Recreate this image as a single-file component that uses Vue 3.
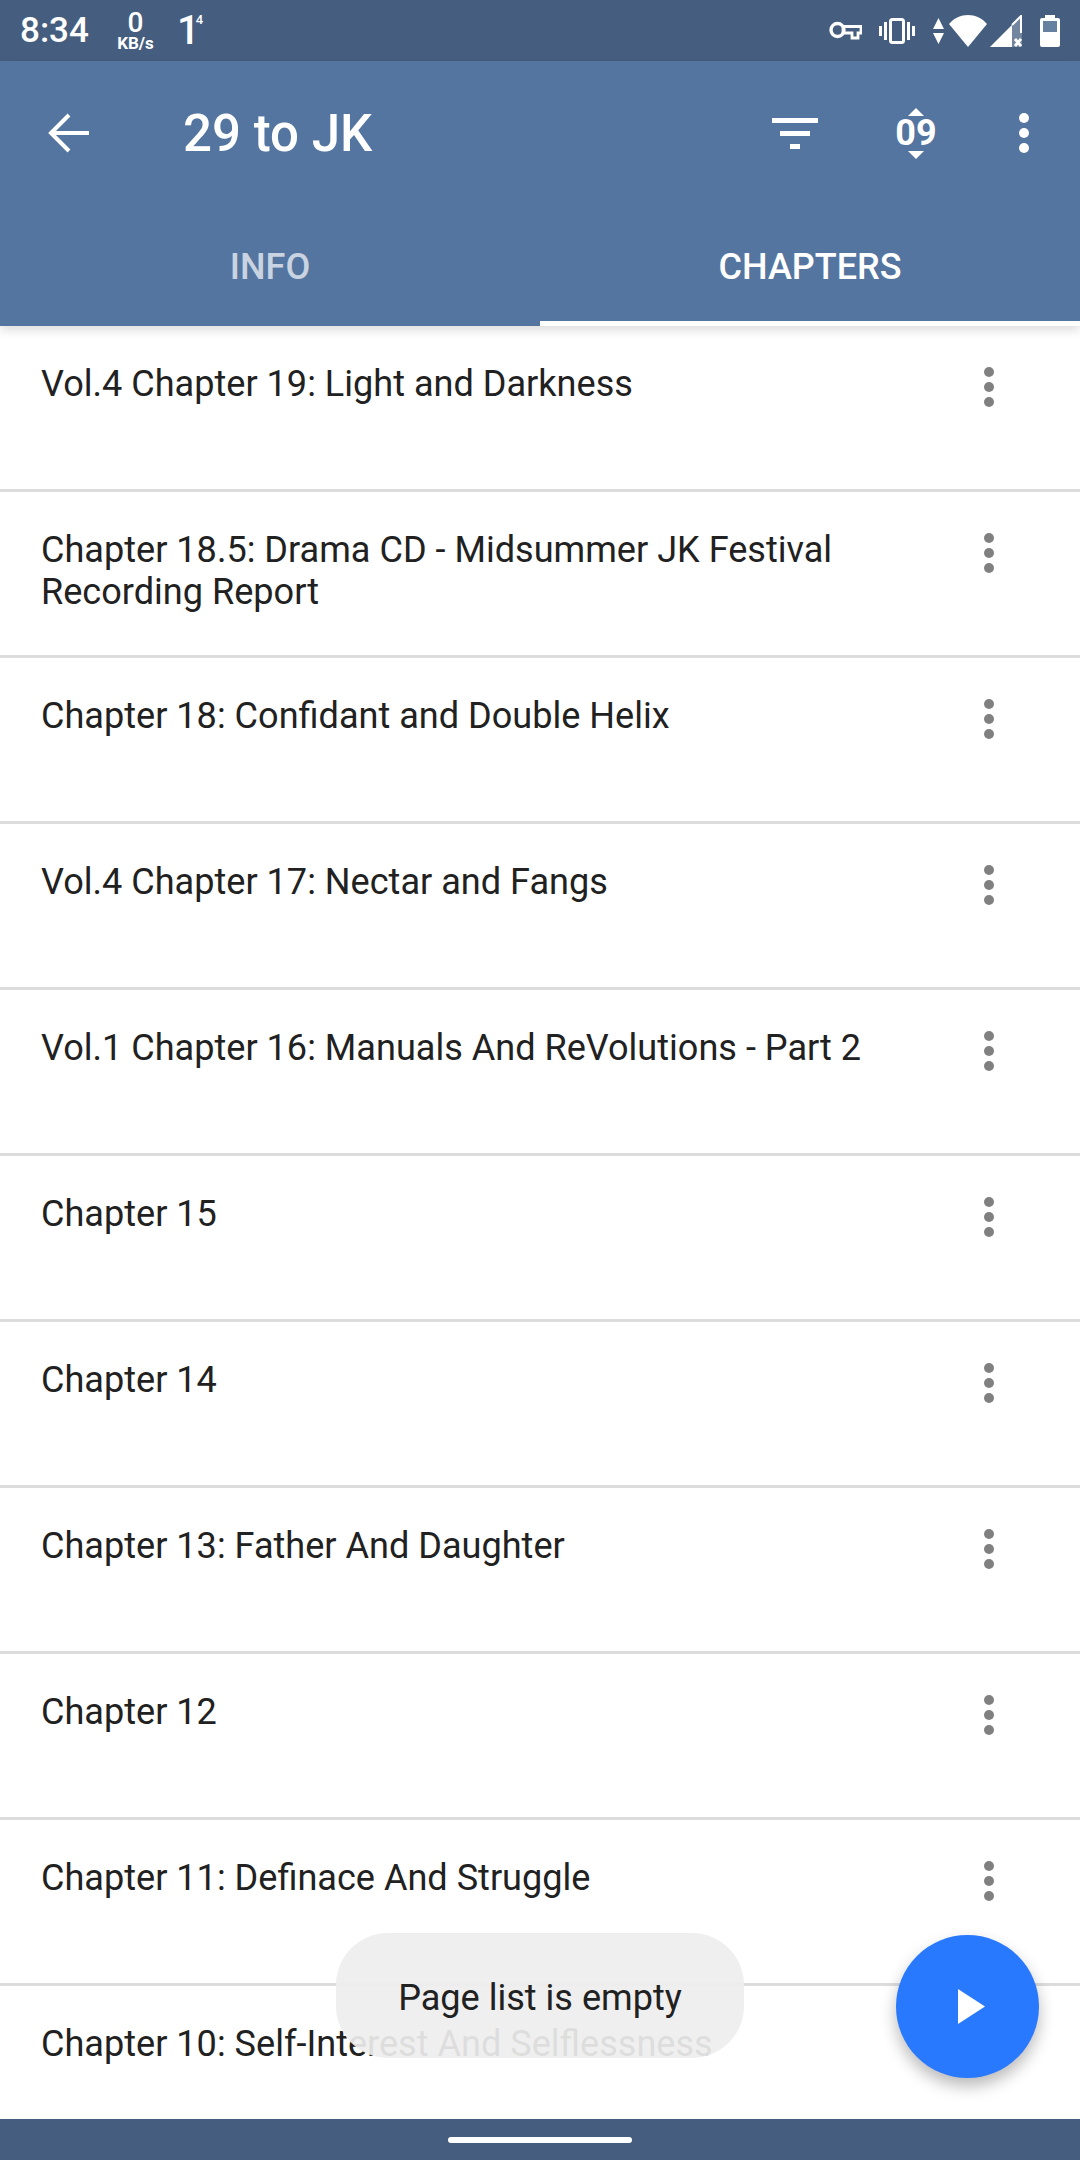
<template>
  <div class="screen">
    <div class="status">
      <span class="clock">8:34</span>
      <div class="speed"><span class="speed-num">0</span><span class="speed-unit">KB/s</span></div>
      <span class="one">1<sup>4</sup></span>
      <div class="spacer"></div>
      <svg class="st-key" width="33" height="19" viewBox="0 0 33 19">
        <circle cx="8.500" cy="9" r="6.500" fill="none" stroke="#fff" stroke-width="3.400" />
        <path d="M14 5.500H32V12H29V17H23V12H14Z" fill="none" stroke="#fff" stroke-width="2.800" />
      </svg>
      <svg class="st-vib" width="36" height="26" viewBox="0 0 36 26">
        <rect x="0" y="8" width="3" height="10" fill="#fff" />
        <rect x="5" y="4" width="3" height="18" fill="#fff" />
        <rect x="11.500" y="1.500" width="13" height="23" rx="2" fill="none" stroke="#fff" stroke-width="3" />
        <rect x="28" y="4" width="3" height="18" fill="#fff" />
        <rect x="33" y="8" width="3" height="10" fill="#fff" />
      </svg>
      <svg class="st-arrows" width="11" height="26" viewBox="0 0 11 26">
        <path d="M5.500 0L11 11H0Z M0 15H11L5.500 26Z" fill="#fff" />
      </svg>
      <svg class="st-wifi" width="38" height="32" viewBox="0 0 38 32">
        <path d="M0 9C10 -3 28 -3 38 9L19 32Z" fill="#fff" />
      </svg>
      <svg class="st-signal" width="32" height="32" viewBox="0 0 32 32">
        <path d="M32 0V32H0Z" fill="#fff" fill-opacity="0.25" />
        <path d="M0 32L22 10V32Z" fill="#fff" />
        <path d="M22 10L31 1V18" fill="none" stroke="#fff" stroke-width="2" />
        <path d="M25 24L31 31M31 24L25 31" stroke="#fff" stroke-width="2.800" />
      </svg>
      <svg class="st-batt" width="20" height="32" viewBox="0 0 20 32">
        <path d="M5 0H15V3H18A2 2 0 0 1 20 5V30A2 2 0 0 1 18 32H2A2 2 0 0 1 0 30V5A2 2 0 0 1 2 3H5Z" fill="#fff" />
        <rect x="3" y="6" width="14" height="11" fill="#66809f" />
      </svg>
    </div>

    <header class="appbar">
      <div class="toolbar">
        <svg class="back" width="42" height="40" viewBox="0 0 42 40">
          <path d="M41 20H3M21 2L3 20L21 38" fill="none" stroke="#fff" stroke-width="4" />
        </svg>
        <span class="title">29 to JK</span>
        <div class="spacer"></div>
        <div class="filter"><i class="l1"></i><i class="l2"></i><i class="l3"></i></div>
        <div class="sort">
          <svg width="16" height="8" viewBox="0 0 16 8"><path d="M8 0L16 8H0Z" fill="#fff" /></svg>
          <span class="sort-num">09</span>
          <svg width="16" height="8" viewBox="0 0 16 8"><path d="M0 0H16L8 8Z" fill="#fff" /></svg>
        </div>
        <div class="more"><i></i><i></i><i></i></div>
      </div>
      <div class="tabs">
        <div class="tab">INFO</div>
        <div class="tab active">CHAPTERS</div>
      </div>
    </header>

    <main class="list">
      <div v-for="c in chapters" :key="c" class="row">
        <div class="name">{{ c }}</div>
        <div class="dots"><i></i><i></i><i></i></div>
      </div>
    </main>

    <div class="navbar"><div class="pill"></div></div>

    <div class="toast">Page list is empty</div>
    <div class="fab">
      <svg width="27" height="35" viewBox="0 0 27 35"><path d="M0 0L27 17.500L0 35Z" fill="#fff" /></svg>
    </div>
  </div>
</template>

<script setup>
const chapters = [
  'Vol.4 Chapter 19: Light and Darkness',
  'Chapter 18.5: Drama CD - Midsummer JK Festival Recording Report',
  'Chapter 18: Confidant and Double Helix',
  'Vol.4 Chapter 17: Nectar and Fangs',
  'Vol.1 Chapter 16: Manuals And ReVolutions - Part 2',
  'Chapter 15',
  'Chapter 14',
  'Chapter 13: Father And Daughter',
  'Chapter 12',
  'Chapter 11: Definace And Struggle',
  'Chapter 10: Self-Interest And Selflessness'
];
</script>

<style scoped>
.screen {
  position: relative;
  width: 1080px;
  height: 2160px;
  display: flex;
  flex-direction: column;
  overflow: hidden;
  background: #fff;
  font-family: Roboto, sans-serif;
}
.spacer {
  flex: 1;
}
.status {
  height: 61px;
  background: #455e7f;
  display: flex;
  align-items: center;
  padding-left: 20px;
  color: #fff;
  flex-shrink: 0;
}
.clock {
  font-size: 35px;
  font-weight: 500;
  width: 97px;
}
.speed {
  display: flex;
  flex-direction: column;
  align-items: center;
  width: 37px;
}
.speed-num {
  font-size: 28px;
  font-weight: 500;
  line-height: 24px;
}
.speed-unit {
  font-size: 17px;
  font-weight: 700;
  line-height: 16px;
}
.one {
  font-size: 40px;
  font-weight: 500;
  margin-left: 23px;
  line-height: 44px;
}
.one sup {
  font-size: 13px;
  vertical-align: 20px;
  line-height: 0;
  margin-left: -4px;
}
.st-key {
  margin-right: 17px;
}
.st-vib {
  margin-right: 18px;
}
.st-arrows {
  margin-right: 5px;
}
.st-wifi {
  margin-right: 3px;
}
.st-signal {
  margin-right: 18px;
}
.st-batt {
  margin-right: 20px;
}
.appbar {
  background: #54759f;
  flex-shrink: 0;
  height: 265px;
  box-shadow: 0 4px 10px rgba(0, 0, 0, 0.14);
  position: relative;
  z-index: 1;
}
.toolbar {
  height: 144px;
  display: flex;
  align-items: center;
  padding-left: 48px;
  color: #fff;
}
.title {
  font-size: 51px;
  font-weight: 500;
  margin-left: 93px;
}
.filter {
  display: flex;
  flex-direction: column;
  align-items: center;
  gap: 8px;
  width: 46px;
}
.filter i {
  display: block;
  height: 5px;
  background: #fff;
}
.l1 { width: 46px; }
.l2 { width: 30px; }
.l3 { width: 10px; }
.sort {
  width: 60px;
  margin-left: 68px;
  display: flex;
  flex-direction: column;
  align-items: center;
}
.sort svg {
  display: block;
}
.sort-num {
  font-size: 36px;
  font-weight: 700;
  line-height: 35px;
}
.more {
  display: flex;
  flex-direction: column;
  gap: 5px;
  margin-left: 73px;
  margin-right: 51px;
}
.more i,
.dots i {
  display: block;
  width: 10px;
  height: 10px;
  border-radius: 50%;
  background: #fff;
}
.tabs {
  display: flex;
  height: 121px;
}
.tab {
  flex: 1;
  display: flex;
  align-items: center;
  justify-content: center;
  padding-top: 2px;
  font-size: 36px;
  font-weight: 500;
  color: rgba(255, 255, 255, 0.7);
  box-sizing: border-box;
}
.tab.active {
  color: #fff;
  border-bottom: 5px solid #fff;
  padding-top: 7px;
}
.list {
  flex: 1;
  overflow: hidden;
  min-height: 0;
}
.row {
  height: 166px;
  box-sizing: border-box;
  border-bottom: 3px solid #dcdcdc;
  display: flex;
  padding: 37px 0 0 41px;
}
.name {
  width: 910px;
  font-size: 36.1px;
  line-height: 42px;
  color: #212121;
}
.dots {
  display: flex;
  flex-direction: column;
  gap: 5px;
  margin-left: 33px;
  padding-top: 4px;
}
.dots i {
  background: #808080;
}
.navbar {
  height: 41px;
  background: #455e7f;
  flex-shrink: 0;
  display: flex;
  justify-content: center;
  align-items: center;
}
.pill {
  width: 184px;
  height: 6px;
  border-radius: 3px;
  background: #fff;
}
.toast {
  position: absolute;
  left: 336px;
  top: 1933px;
  width: 408px;
  height: 125px;
  padding-top: 4px;
  box-sizing: border-box;
  border-radius: 52px;
  background: rgba(238, 238, 238, 0.92);
  color: #212121;
  font-size: 36.1px;
  display: flex;
  align-items: center;
  justify-content: center;
}
.fab {
  position: absolute;
  left: 896px;
  top: 1935px;
  width: 143px;
  height: 143px;
  border-radius: 50%;
  background: #2979ff;
  display: flex;
  align-items: center;
  justify-content: center;
  box-shadow: 0 8px 16px rgba(0, 0, 0, 0.28);
}
.fab svg {
  margin-left: 8px;
}
</style>
